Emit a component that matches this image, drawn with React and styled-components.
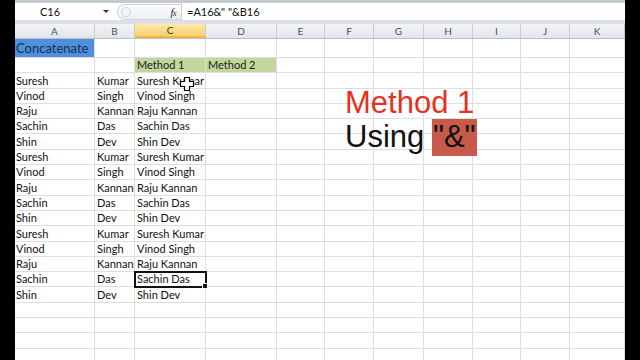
import React from "react"
import styled, { createGlobalStyle } from "styled-components"

const GlobalStyle = createGlobalStyle`
  html, body {
    margin: 0;
    padding: 0;
    background: #000;
  }
  body {
    width: 640px;
    height: 360px;
    overflow: hidden;
    font-family: "Lato", "Open Sans", sans-serif;
  }
`

const columns = [
  { name: "A", width: 80 },
  { name: "B", width: 40 },
  { name: "C", width: 71 },
  { name: "D", width: 71 },
  { name: "E", width: 48 },
  { name: "F", width: 49 },
  { name: "G", width: 50 },
  { name: "H", width: 49 },
  { name: "I", width: 48 },
  { name: "J", width: 49 },
  { name: "K", width: 55 }
]

const gridTemplate = columns.map(c => c.width + "px").join(" ")

const names = [
  ["Suresh", "Kumar"],
  ["Vinod", "Singh"],
  ["Raju", "Kannan"],
  ["Sachin", "Das"],
  ["Shin", "Dev"]
]

const people = [...names, ...names, ...names]

const Frame = styled.div`
  display: flex;
  width: 640px;
  height: 360px;
  background: #000;
  overflow: hidden;
`

const Sheet = styled.div`
  position: relative;
  flex: 0 0 610px;
  margin-left: 15px;
  height: 360px;
  background: #fff;
  overflow: hidden;
`

const FormulaBar = styled.div`
  display: flex;
  align-items: center;
  height: 17px;
  border-top: 3px solid #c4cad2;
  border-bottom: 4px solid #dde1e6;
  background: #fff;
  font-size: 11px;
  color: #111;
`

const NameBox = styled.div`
  display: flex;
  align-items: center;
  justify-content: space-between;
  width: 100px;
  height: 100%;
  padding-left: 25px;
  padding-right: 6px;
  box-sizing: border-box;
`

const DropArrow = styled.span`
  width: 0;
  height: 0;
  border-left: 3px solid transparent;
  border-right: 3px solid transparent;
  border-top: 3px solid #333;
`

const FxButton = styled.div`
  display: flex;
  align-items: center;
  justify-content: space-between;
  width: 64px;
  height: 16px;
  margin-left: 2px;
  padding: 0 5px 0 3px;
  box-sizing: border-box;
  border: 1px solid #cfd4db;
  border-right: none;
  border-radius: 8px 0 0 8px;
  background: linear-gradient(#fdfdfe, #eceef1);
`

const Cancel = styled.span`
  width: 8px;
  height: 8px;
  border-radius: 50%;
  border: 1px solid #d0d4da;
  background: #f3f4f6;
`

const Fx = styled.span`
  font-family: "Liberation Serif", serif;
  font-style: italic;
  font-size: 11px;
  color: #222;
  letter-spacing: -0.5px;
  small {
    font-size: 8px;
  }
`

const Formula = styled.div`
  flex: 1;
  height: 100%;
  display: flex;
  align-items: center;
  padding-left: 5px;
  border-left: 1px solid #c9ced5;
`

const HeaderRow = styled.div`
  display: grid;
  grid-template-columns: ${gridTemplate};
  height: 15px;
  border-bottom: 1px solid #b9c0c9;
  box-sizing: border-box;
`

const ColHeader = styled.div`
  display: flex;
  align-items: center;
  justify-content: center;
  font-size: 10px;
  color: ${p => (p.$active ? "#3a3320" : "#44505f")};
  background: ${p => (p.$active
    ? "linear-gradient(#fde9a8, #f7d070)"
    : "linear-gradient(#f3f4f6, #e2e5ea)")};
  border-right: 1px solid #c7ccd3;
  border-bottom: ${p => (p.$active ? "2px solid #f0b445" : "none")};
  box-sizing: border-box;
`

const Row = styled.div`
  display: grid;
  grid-template-columns: ${gridTemplate};
  height: ${p => p.$height}px;
`

const Cell = styled.div`
  position: relative;
  display: flex;
  align-items: flex-end;
  padding: 0 0 1px ${p => p.$pad || 1}px;
  box-sizing: border-box;
  border-right: 1px solid #dcdfe2;
  border-bottom: 1px solid #dcdfe2;
  background: ${p => p.$fill || "#fff"};
  color: ${p => p.$color || "#111"};
  font-size: ${p => p.$size || 11}px;
  white-space: nowrap;
  overflow: visible;
  ${p => p.$selected && `
    outline: 2px solid #111;
    outline-offset: -1px;
    z-index: 2;
    &::after {
      content: "";
      position: absolute;
      right: -3px;
      bottom: -3px;
      width: 4px;
      height: 4px;
      background: #111;
      border: 1px solid #fff;
    }
  `}
`

const Callout = styled.div`
  position: absolute;
  left: 330px;
  top: 86px;
  font-family: "Liberation Sans", Arial, sans-serif;
  font-size: 31px;
  line-height: 34px;
  color: #111;
  z-index: 3;
`

const Title = styled.div`
  color: #e5311f;
`

const Mark = styled.span`
  display: inline-block;
  line-height: 34px;
  margin-left: -1px;
  padding: 1px 1px 2px;
  background: #c75a4b;
  vertical-align: top;
  margin-top: -1px;
`

const Cursor = styled.svg`
  position: absolute;
  left: 164px;
  top: 76px;
  z-index: 4;
`

function renderRow(values, height, key, opts = {}) {
  return (
    <Row key={key} $height={height}>
      {columns.map((col, i) => {
        const cellOpts = (opts.cells && opts.cells[i]) || {}
        return (
          <Cell
            key={col.name}
            $pad={i === 0 ? 1 : 2}
            {...cellOpts}
          >
            {values[i] || ""}
          </Cell>
        )
      })}
    </Row>
  )
}

const App = () => {
  const dataRows = people.map(([first, last], idx) => {
    const rowNumber = idx + 3
    const selected = rowNumber === 16
    return renderRow(
      [first, last, first + " " + last],
      15.3,
      "r" + rowNumber,
      { cells: { 2: { $selected: selected } } }
    )
  })

  const emptyRows = [0, 1, 2, 3, 4].map(i => renderRow([], 15.3, "e" + i))

  return (
    <Frame>
      <GlobalStyle />
      <Sheet>
        <FormulaBar>
          <NameBox>
            <span>C16</span>
            <DropArrow />
          </NameBox>
          <FxButton>
            <Cancel />
            <Fx>f<small>x</small></Fx>
          </FxButton>
          <Formula>=A16&amp;" "&amp;B16</Formula>
        </FormulaBar>
        <HeaderRow>
          {columns.map(col => (
            <ColHeader key={col.name} $active={col.name === "C"}>{col.name}</ColHeader>
          ))}
        </HeaderRow>
        {renderRow(["Concatenate"], 19, "r1", {
          cells: { 0: { $fill: "#4f8fdc", $color: "#142f58", $size: 13, $pad: 1 } }
        })}
        {renderRow(["", "", "Method 1", "Method 2"], 15.3, "r2", {
          cells: {
            2: { $fill: "#c3d69b", $color: "#222" },
            3: { $fill: "#c3d69b", $color: "#222" }
          }
        })}
        {dataRows}
        {emptyRows}
        <Callout>
          <Title>Method 1</Title>
          <div>Using <Mark>"&amp;"</Mark></div>
        </Callout>
        <Cursor width="16" height="16" viewBox="0 0 16 16">
          <path
            d="M5.5 1.5h5v4h4v5h-4v4h-5v-4h-4v-5h4z"
            fill="#fff"
            stroke="#000"
            strokeWidth="1.2"
          />
        </Cursor>
      </Sheet>
    </Frame>
  )
}

export default App
